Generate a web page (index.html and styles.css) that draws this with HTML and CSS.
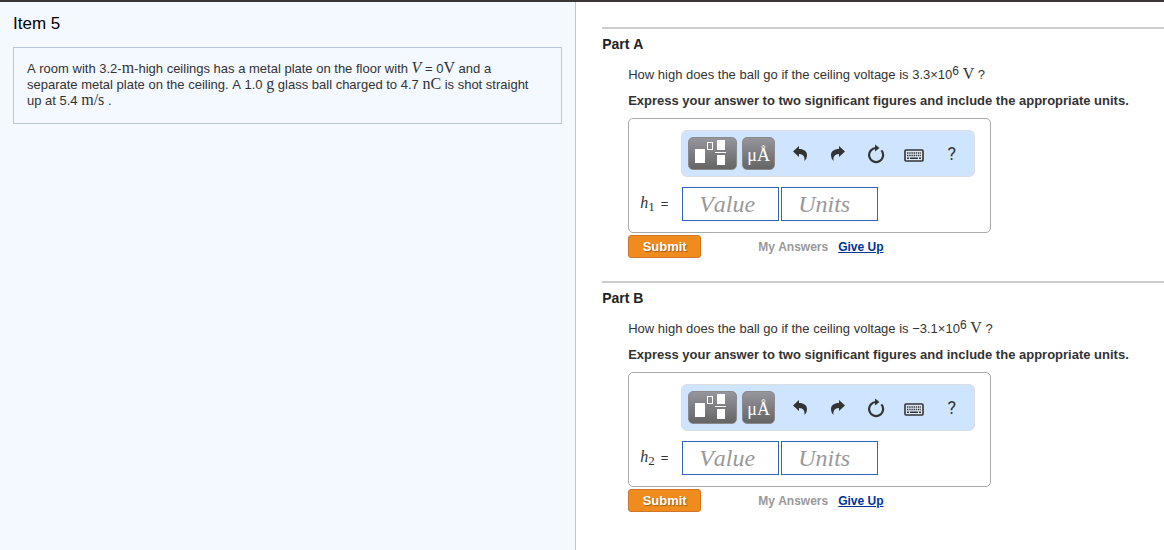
FILE: index.html
```html
<!DOCTYPE html>
<html lang="en">
<head>
  <meta charset="UTF-8" />
  <meta name="viewport" content="width=device-width, initial-scale=1" />
  <title>Item 5</title>
  <link rel="stylesheet" href="styles.css">
</head>
<body>
  <!-- Shared icons -->
  <svg class="sprite" width="0" height="0" aria-hidden="true">
    <symbol id="icon-templates" viewBox="0 0 35 29">
      <rect x="0" y="10" width="10" height="14" fill="#fff" />
      <rect x="12.5" y="3.5" width="5" height="7" fill="none" stroke="#fff" />
      <rect x="22" y="1" width="8" height="10" fill="#fff" />
      <rect x="20" y="13" width="11" height="1" fill="#fff" />
      <rect x="22" y="16" width="8" height="10" fill="#fff" />
    </symbol>
    <symbol id="icon-undo" viewBox="0 0 16 16">
      <path d="M1 5.5 L7 0 V3 C12 3 15 5.5 15 9 C15 11.5 14 13.5 12.5 15 C13 11 11.5 8 7 8 V11 Z" fill="#333" />
    </symbol>
    <symbol id="icon-reset" viewBox="0 0 18 20">
      <path d="M9.5 4 A7 7 0 1 0 14.4 6.4" fill="none" stroke="#333" stroke-width="2.2" />
      <path d="M8 0.5 L12.5 4 L8 7.5 Z" fill="#333" />
    </symbol>
    <symbol id="icon-keyboard" viewBox="0 0 20 13">
      <rect x="1" y="1" width="18" height="11" rx="1" fill="#dce9f8" stroke="#333" stroke-width="1.6" />
      <path d="M3 4 H17 M3 6.5 H17" stroke="#333" stroke-width="1.4" stroke-dasharray="1.4 0.8" />
      <path d="M3 9.2 H5 M6 9.2 H14 M15 9.2 H17" stroke="#333" stroke-width="1.4" />
    </symbol>
  </svg>

  <div class="page">
    <aside class="item">
      <h1>Item 5</h1>
      <p class="problem">A room with 3.2-<span class="unit">m</span>-high ceilings has a metal plate on the floor with <i class="math">V</i> = 0<span class="unit">V</span> and a<br>
        separate metal plate on the ceiling. A 1.0 <span class="unit">g</span> glass ball charged to 4.7 <span class="unit">nC</span> is shot straight<br>
        up at 5.4 <span class="unit">m/s</span> .</p>
    </aside>

    <main>
      <section class="part">
        <h2>Part A</h2>
        <form class="part-body">
          <p>How high does the ball go if the ceiling voltage is 3.3×10<sup>6</sup> <span class="unit">V</span> ?</p>
          <p class="instructions">Express your answer to two significant figures and include the appropriate units.</p>
          <div class="answer">
            <div class="toolbar">
              <button type="button" class="key key-wide" aria-label="Templates"><svg width="35" height="29"><use href="#icon-templates" /></svg></button>
              <button type="button" class="key">μÅ</button>
              <button type="button" class="tool" aria-label="Undo"><svg width="16" height="16"><use href="#icon-undo" /></svg></button>
              <button type="button" class="tool" aria-label="Redo"><svg class="flip" width="16" height="16"><use href="#icon-undo" /></svg></button>
              <button type="button" class="tool" aria-label="Reset"><svg width="18" height="20"><use href="#icon-reset" /></svg></button>
              <button type="button" class="tool tool-low" aria-label="Keyboard shortcuts"><svg width="20" height="13"><use href="#icon-keyboard" /></svg></button>
              <button type="button" class="tool">?</button>
            </div>
            <div class="fields">
              <label for="value-a"><span><i class="math">h</i><sub>1</sub></span> =</label>
              <input type="text" id="value-a" placeholder="Value">
              <input type="text" id="units-a" placeholder="Units" aria-label="Units">
            </div>
          </div>
          <div class="actions">
            <button type="submit" class="submit">Submit</button>
            <span class="my-answers">My Answers</span>
            <a href="#">Give Up</a>
          </div>
        </form>
      </section>

      <section class="part">
        <h2>Part B</h2>
        <form class="part-body">
          <p>How high does the ball go if the ceiling voltage is −3.1×10<sup>6</sup> <span class="unit">V</span> ?</p>
          <p class="instructions">Express your answer to two significant figures and include the appropriate units.</p>
          <div class="answer">
            <div class="toolbar">
              <button type="button" class="key key-wide" aria-label="Templates"><svg width="35" height="29"><use href="#icon-templates" /></svg></button>
              <button type="button" class="key">μÅ</button>
              <button type="button" class="tool" aria-label="Undo"><svg width="16" height="16"><use href="#icon-undo" /></svg></button>
              <button type="button" class="tool" aria-label="Redo"><svg class="flip" width="16" height="16"><use href="#icon-undo" /></svg></button>
              <button type="button" class="tool" aria-label="Reset"><svg width="18" height="20"><use href="#icon-reset" /></svg></button>
              <button type="button" class="tool tool-low" aria-label="Keyboard shortcuts"><svg width="20" height="13"><use href="#icon-keyboard" /></svg></button>
              <button type="button" class="tool">?</button>
            </div>
            <div class="fields">
              <label for="value-b"><span><i class="math">h</i><sub>2</sub></span> =</label>
              <input type="text" id="value-b" placeholder="Value">
              <input type="text" id="units-b" placeholder="Units" aria-label="Units">
            </div>
          </div>
          <div class="actions">
            <button type="submit" class="submit">Submit</button>
            <span class="my-answers">My Answers</span>
            <a href="#">Give Up</a>
          </div>
        </form>
      </section>
    </main>
  </div>
</body>
</html>
```
FILE: styles.css
```css
:root {
  --text: #333;
  --panel: #f4f8ff;
  --panel-border: #b9c8d8;
  --toolbar: #cfe5ff;
  --field: #2f66c2;
  --orange: #f08c1e;
  --muted: #999;
  --link: #039;
}

* {
  margin: 0;
  padding: 0;
  box-sizing: border-box;
}

body {
  font-family: "Liberation Sans", Arial, sans-serif;
  font-size: 13px;
  font-kerning: none;
  line-height: 16px;
  color: var(--text);
  background: #fff;
}

.sprite {
  position: absolute;
}

.page {
  display: flex;
  min-height: 100vh;
  border-top: 2px solid #3a3638;
}

/* Left panel */
.item {
  width: 49.5%;
  padding: 12px 13px;
  background: var(--panel);
  border-right: 1px solid var(--panel-border);
}

.item h1 {
  font-size: 17px;
  font-weight: normal;
  line-height: 20px;
  color: #000;
  margin-bottom: 13px;
}

.problem {
  padding: 13px 13px 14px;
  border: 1px solid var(--panel-border);
}

.unit,
.math {
  font-family: "Liberation Serif", "Times New Roman", serif;
  font-size: 16px;
  line-height: 1px;
}

/* Right panel */
main {
  flex: 1;
  padding: 25px 0 0 26px;
}

.part {
  padding-top: 7px;
  margin-bottom: 23px;
  border-top: 2px solid #ccc;
}

.part h2 {
  font-size: 14px;
  line-height: 16px;
  color: #222;
  margin-bottom: 15px;
}

.part-body {
  padding-left: 26px;
}

.part-body p {
  margin-bottom: 10px;
}

.part-body .instructions {
  font-weight: bold;
  margin-bottom: 9px;
}

sup {
  font-size: 12px;
  line-height: 1px;
  vertical-align: 4px;
}

sub {
  font-family: "Liberation Serif", "Times New Roman", serif;
  font-size: 13px;
  line-height: 1px;
  vertical-align: -3px;
}

.answer {
  width: 363px;
  padding: 11px;
  border: 1px solid #aaa;
  border-radius: 5px;
}

.toolbar {
  display: flex;
  align-items: center;
  gap: 5px;
  height: 47px;
  margin: 0 4px 10px 41px;
  padding: 0 6px;
  background: var(--toolbar);
  border: 1px solid #dadde2;
  border-radius: 6px;
}

.toolbar button {
  display: flex;
  align-items: center;
  justify-content: center;
  cursor: pointer;
}

.key {
  width: 33px;
  height: 33px;
  padding-top: 4px;
  color: #fff;
  font-family: "Liberation Serif", "Times New Roman", serif;
  font-size: 18px;
  background: linear-gradient(#95959d, #656565);
  border: 1px solid #8a8a8a;
  border-radius: 5px;
}

.key-wide {
  width: 49px;
  padding-top: 0;
}

.tool {
  width: 33px;
  height: 33px;
  color: var(--text);
  font-family: Roboto, "Liberation Sans", sans-serif;
  font-size: 18px;
  background: none;
  border: none;
}

.key + .tool {
  margin-left: 3px;
}

.tool-low {
  padding-top: 3px;
}

.flip {
  transform: scaleX(-1);
}

.fields {
  display: flex;
  align-items: center;
  gap: 2px;
}

.fields label {
  display: flex;
  gap: 6px;
  width: 40px;
}

.fields input {
  width: 97px;
  height: 34px;
  padding: 0 16px;
  font-family: "Liberation Serif", "Times New Roman", serif;
  font-size: 24px;
  font-style: italic;
  font-kerning: none;
  color: var(--text);
  border: 1px solid var(--field);
}

.fields input::placeholder {
  color: var(--muted);
}

.actions {
  display: flex;
  align-items: center;
  margin-top: 2px;
  font-size: 12px;
  font-weight: bold;
}

.submit {
  width: 73px;
  height: 23px;
  font-family: inherit;
  font-size: 13px;
  font-weight: bold;
  color: #fff;
  text-shadow: 1px 1px 1px #a05a10;
  background: var(--orange);
  border: 1px solid #d0762a;
  border-radius: 3px;
  cursor: pointer;
}

.my-answers {
  margin: 0 10px 0 57px;
  color: var(--muted);
}

.actions a {
  color: var(--link);
}
```
